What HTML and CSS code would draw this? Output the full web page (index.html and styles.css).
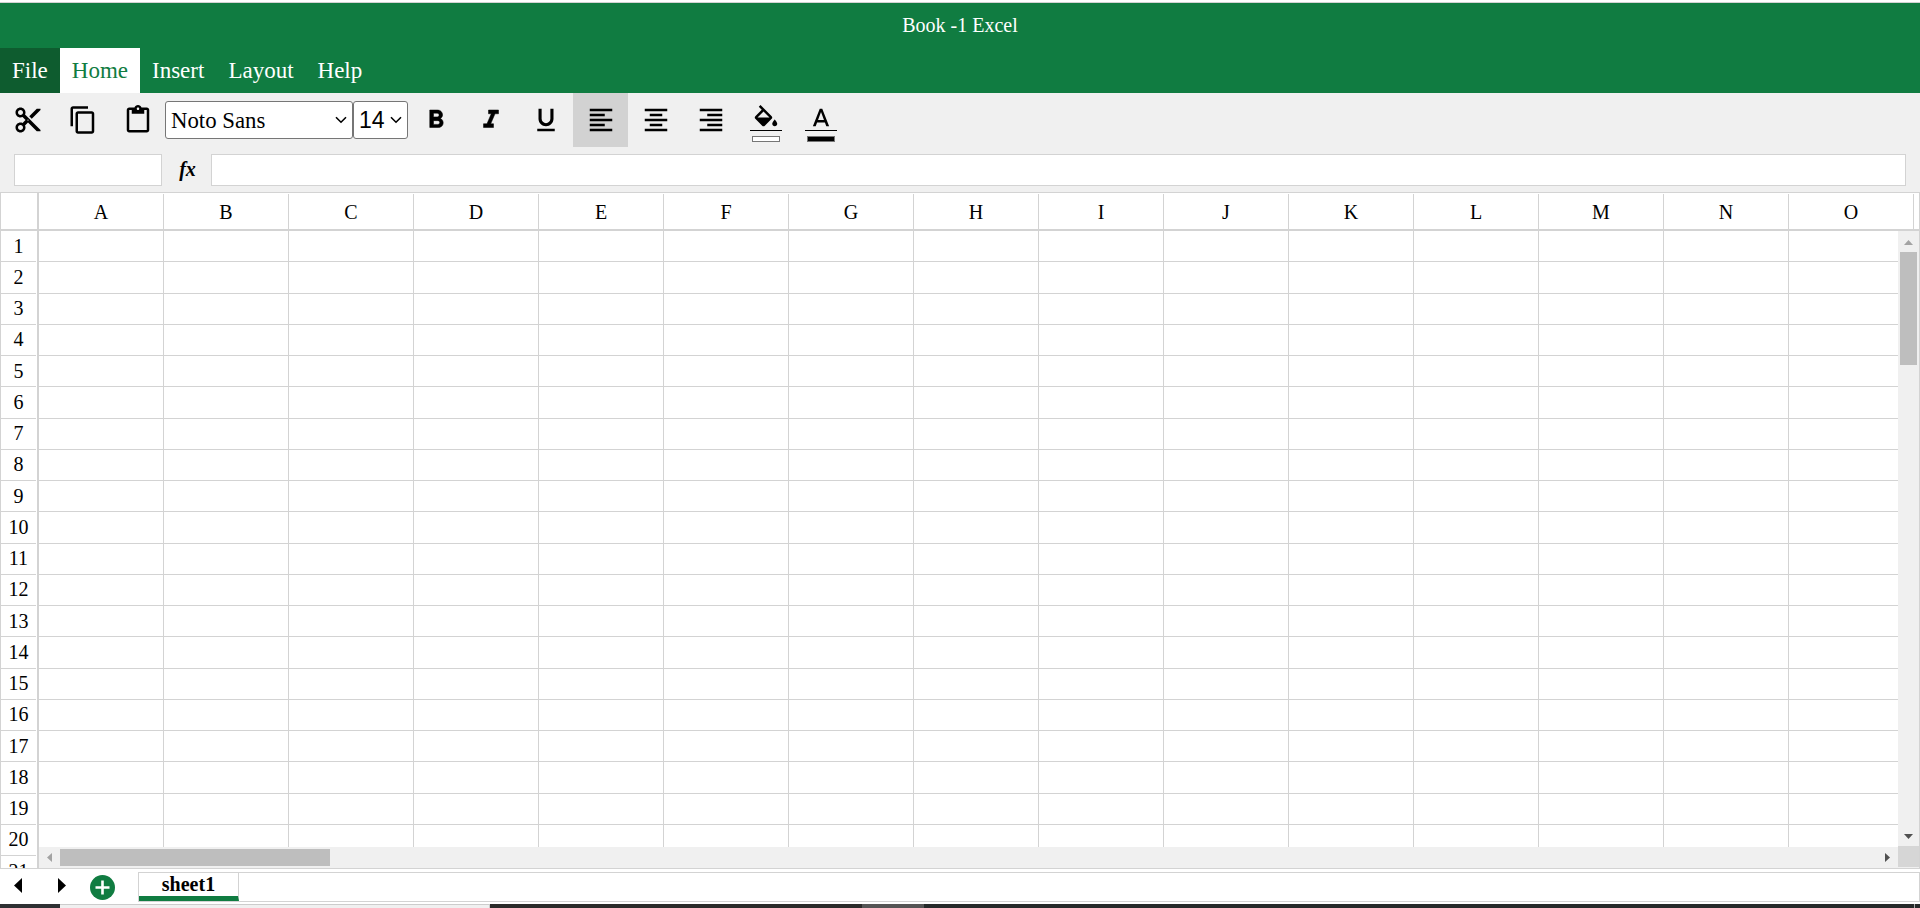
FILE: index.html
```html
<!DOCTYPE html>
<html lang="en">
<head>
<meta charset="utf-8">
<title>Book -1 Excel</title>
<link rel="stylesheet" href="styles.css">
</head>
<body>
<header class="appbar">
  <div class="title">Book -1 Excel</div>
  <nav class="menu">
    <a class="menu-item menu-file">File</a>
    <a class="menu-item menu-active">Home</a>
    <a class="menu-item">Insert</a>
    <a class="menu-item">Layout</a>
    <a class="menu-item">Help</a>
  </nav>
</header>
<section class="toolbar">
  <button class="tool"><svg viewBox="0 0 24 24"><path d="M9.64 7.64c.23-.5.36-1.05.36-1.64 0-2.21-1.79-4-4-4S2 3.79 2 6s1.79 4 4 4c.59 0 1.14-.13 1.64-.36L10 12l-2.36 2.36C7.14 14.13 6.59 14 6 14c-2.21 0-4 1.79-4 4s1.79 4 4 4 4-1.79 4-4c0-.59-.13-1.14-.36-1.64L12 14l7 7h3v-1L9.64 7.64zM6 8c-1.1 0-2-.89-2-2s.9-2 2-2 2 .89 2 2-.9 2-2 2zm0 12c-1.1 0-2-.89-2-2s.9-2 2-2 2 .89 2 2-.9 2-2 2zm6-7.5c-.28 0-.5-.22-.5-.5s.22-.5.5-.5.5.22.5.5-.22.5-.5.5zM19 3l-6 6 2 2 7-7V3z"/></svg></button>
  <button class="tool"><svg viewBox="0 0 24 24"><path d="M16 1H4c-1.1 0-2 .9-2 2v14h2V3h12V1zm3 4H8c-1.1 0-2 .9-2 2v14c0 1.1.9 2 2 2h11c1.1 0 2-.9 2-2V7c0-1.1-.9-2-2-2zm0 16H8V7h11v14z"/></svg></button>
  <button class="tool"><svg viewBox="0 0 24 24"><path d="M19 2h-4.18C14.4.84 13.3 0 12 0c-1.3 0-2.4.84-2.82 2H5c-1.1 0-2 .9-2 2v16c0 1.1.9 2 2 2h14c1.1 0 2-.9 2-2V4c0-1.1-.9-2-2-2zm-7 0c.55 0 1 .45 1 1s-.45 1-1 1-1-.45-1-1 .45-1 1-1zm7 18H5V4h2v3h10V4h2v16z"/></svg></button>
  <select class="select select-font"><option>Noto Sans</option></select>
  <select class="select select-size"><option>14</option></select>
  <button class="tool tool-heavy"><svg viewBox="0 0 24 24"><path d="M15.6 10.79c.97-.67 1.65-1.77 1.65-2.79 0-2.26-1.75-4-4-4H7v14h7.04c2.09 0 3.71-1.7 3.71-3.79 0-1.52-.86-2.82-2.15-3.42zM10 6.5h3c.83 0 1.5.67 1.5 1.5s-.67 1.5-1.5 1.5h-3v-3zm3.5 9H10v-3h3.5c.83 0 1.5.67 1.5 1.5s-.67 1.5-1.5 1.5z"/></svg></button>
  <button class="tool tool-heavy"><svg viewBox="0 0 24 24"><path d="M10 4v3h2.21l-3.42 8H6v3h8v-3h-2.21l3.42-8H18V4z"/></svg></button>
  <button class="tool"><svg viewBox="0 0 24 24"><path d="M12 17c3.31 0 6-2.69 6-6V3h-2.5v8c0 1.93-1.57 3.5-3.5 3.5S8.5 12.93 8.5 11V3H6v8c0 3.31 2.69 6 6 6zm-7 2v2h14v-2H5z"/></svg></button>
  <button class="tool tool-active"><svg viewBox="0 0 24 24"><path d="M15 15H3v2h12v-2zm0-8H3v2h12V7zM3 13h18v-2H3v2zm0 8h18v-2H3v2zM3 3v2h18V3H3z"/></svg></button>
  <button class="tool"><svg viewBox="0 0 24 24"><path d="M7 15v2h10v-2H7zm-4 6h18v-2H3v2zm0-8h18v-2H3v2zm4-6v2h10V7H7zM3 3v2h18V3H3z"/></svg></button>
  <button class="tool"><svg viewBox="0 0 24 24"><path d="M3 21h18v-2H3v2zm6-4h12v-2H9v2zm-6-4h18v-2H3v2zm6-4h12V7H9v2zM3 3v2h18V3H3z"/></svg></button>
  <button class="tool tool-color">
    <svg viewBox="0 0 24 24"><path d="M16.56 8.94L7.62 0 6.21 1.41l2.38 2.38-5.15 5.15c-.59.59-.59 1.54 0 2.12l5.5 5.5c.29.29.68.44 1.06.44s.77-.15 1.06-.44l5.5-5.5c.59-.58.59-1.53 0-2.12zM5.21 10L10 5.21 14.79 10H5.21zM19 11.5s-2 2.17-2 3.5c0 1.1.9 2 2 2s2-.9 2-2c0-1.33-2-3.5-2-3.5z"/></svg>
    <span class="swatch swatch-white"></span>
  </button>
  <button class="tool tool-color">
    <svg viewBox="0 0 24 24"><path d="M11 3L5.5 17h2.25l1.12-3h6.25l1.12 3h2.25L13 3h-2zm-1.38 9L12 5.67 14.38 12H9.62z"/></svg>
    <span class="swatch swatch-black"></span>
  </button>
</section>
<section class="formula">
  <input class="field field-name" type="text">
  <span class="fx">fx</span>
  <input class="field field-formula" type="text">
</section>
<main class="frame">
  <div class="grid grid-head">
    <div class="corner"></div><div class="ch">A</div><div class="ch">B</div><div class="ch">C</div><div class="ch">D</div><div class="ch">E</div><div class="ch">F</div><div class="ch">G</div><div class="ch">H</div><div class="ch">I</div><div class="ch">J</div><div class="ch">K</div><div class="ch">L</div><div class="ch">M</div><div class="ch">N</div><div class="ch">O</div>
  </div>
  <div class="grid grid-body">
    <div class="rh"><span>1</span></div><i></i><i></i><i></i><i></i><i></i><i></i><i></i><i></i><i></i><i></i><i></i><i></i><i></i><i></i><i></i>
    <div class="rh"><span>2</span></div><i></i><i></i><i></i><i></i><i></i><i></i><i></i><i></i><i></i><i></i><i></i><i></i><i></i><i></i><i></i>
    <div class="rh"><span>3</span></div><i></i><i></i><i></i><i></i><i></i><i></i><i></i><i></i><i></i><i></i><i></i><i></i><i></i><i></i><i></i>
    <div class="rh"><span>4</span></div><i></i><i></i><i></i><i></i><i></i><i></i><i></i><i></i><i></i><i></i><i></i><i></i><i></i><i></i><i></i>
    <div class="rh"><span>5</span></div><i></i><i></i><i></i><i></i><i></i><i></i><i></i><i></i><i></i><i></i><i></i><i></i><i></i><i></i><i></i>
    <div class="rh"><span>6</span></div><i></i><i></i><i></i><i></i><i></i><i></i><i></i><i></i><i></i><i></i><i></i><i></i><i></i><i></i><i></i>
    <div class="rh"><span>7</span></div><i></i><i></i><i></i><i></i><i></i><i></i><i></i><i></i><i></i><i></i><i></i><i></i><i></i><i></i><i></i>
    <div class="rh"><span>8</span></div><i></i><i></i><i></i><i></i><i></i><i></i><i></i><i></i><i></i><i></i><i></i><i></i><i></i><i></i><i></i>
    <div class="rh"><span>9</span></div><i></i><i></i><i></i><i></i><i></i><i></i><i></i><i></i><i></i><i></i><i></i><i></i><i></i><i></i><i></i>
    <div class="rh"><span>10</span></div><i></i><i></i><i></i><i></i><i></i><i></i><i></i><i></i><i></i><i></i><i></i><i></i><i></i><i></i><i></i>
    <div class="rh"><span>11</span></div><i></i><i></i><i></i><i></i><i></i><i></i><i></i><i></i><i></i><i></i><i></i><i></i><i></i><i></i><i></i>
    <div class="rh"><span>12</span></div><i></i><i></i><i></i><i></i><i></i><i></i><i></i><i></i><i></i><i></i><i></i><i></i><i></i><i></i><i></i>
    <div class="rh"><span>13</span></div><i></i><i></i><i></i><i></i><i></i><i></i><i></i><i></i><i></i><i></i><i></i><i></i><i></i><i></i><i></i>
    <div class="rh"><span>14</span></div><i></i><i></i><i></i><i></i><i></i><i></i><i></i><i></i><i></i><i></i><i></i><i></i><i></i><i></i><i></i>
    <div class="rh"><span>15</span></div><i></i><i></i><i></i><i></i><i></i><i></i><i></i><i></i><i></i><i></i><i></i><i></i><i></i><i></i><i></i>
    <div class="rh"><span>16</span></div><i></i><i></i><i></i><i></i><i></i><i></i><i></i><i></i><i></i><i></i><i></i><i></i><i></i><i></i><i></i>
    <div class="rh"><span>17</span></div><i></i><i></i><i></i><i></i><i></i><i></i><i></i><i></i><i></i><i></i><i></i><i></i><i></i><i></i><i></i>
    <div class="rh"><span>18</span></div><i></i><i></i><i></i><i></i><i></i><i></i><i></i><i></i><i></i><i></i><i></i><i></i><i></i><i></i><i></i>
    <div class="rh"><span>19</span></div><i></i><i></i><i></i><i></i><i></i><i></i><i></i><i></i><i></i><i></i><i></i><i></i><i></i><i></i><i></i>
    <div class="rh"><span>20</span></div><i></i><i></i><i></i><i></i><i></i><i></i><i></i><i></i><i></i><i></i><i></i><i></i><i></i><i></i><i></i>
    <div class="rh"><span>21</span></div><i></i><i></i><i></i><i></i><i></i><i></i><i></i><i></i><i></i><i></i><i></i><i></i><i></i><i></i><i></i>
  </div>
  <div class="vscroll">
    <svg class="sb-arrow sb-up" viewBox="0 0 9 5"><polygon points="4.5,0 9,5 0,5"/></svg>
    <div class="vthumb"></div>
    <svg class="sb-arrow sb-down" viewBox="0 0 9 5"><polygon points="0,0 9,0 4.5,5"/></svg>
  </div>
  <div class="hscroll">
    <svg class="sb-arrow sb-left" viewBox="0 0 5 9"><polygon points="5,0 5,9 0,4.5"/></svg>
    <div class="hthumb"></div>
    <svg class="sb-arrow sb-right" viewBox="0 0 5 9"><polygon points="0,0 5,4.5 0,9"/></svg>
    <div class="sb-corner"></div>
  </div>
</main>
<footer class="sheets">
  <svg class="nav nav-prev" viewBox="0 0 8 15"><polygon points="8,0 8,15 0,7.5"/></svg>
  <svg class="nav nav-next" viewBox="0 0 8 15"><polygon points="0,0 8,7.5 0,15"/></svg>
  <svg class="add" viewBox="0 0 25 25"><circle cx="12.5" cy="12.5" r="12.5"/><path d="M11.2 5.5h2.6v5.7h5.7v2.6h-5.7v5.7h-2.6v-5.7H5.5v-2.6h5.7z"/></svg>
  <div class="tabs">
    <div class="tab">sheet1</div>
  </div>
</footer>
<div class="strip">
  <span class="strip-a"></span><span class="strip-b"></span><span class="strip-c"></span><span class="strip-d"></span><span class="strip-e"></span><span class="strip-tick"></span><span class="strip-f"></span>
</div>
</body>
</html>
```
FILE: styles.css
```css
* { box-sizing: border-box; }
html, body { margin: 0; height: 908px; overflow: hidden; }
body {
  display: flex;
  flex-direction: column;
  background: #fff;
  font-family: "Liberation Serif", "Times New Roman", serif;
  color: #000;
  padding-top: 2px;
}
.appbar {
  flex: none;
  border-top: 1px solid #d3d3d3;
  background: #107c41;
  color: #fff;
}
.title {
  height: 45px;
  display: flex;
  align-items: center;
  justify-content: center;
  font-size: 20px;
}
.menu { display: flex; height: 45px; }
.menu-item {
  display: flex;
  align-items: center;
  padding: 0 12px;
  font-size: 23px;
}
.menu-file { background: #0e5c2f; }
.menu-active { background: #fff; color: #107c41; }

.toolbar {
  flex: none;
  display: flex;
  align-items: center;
  height: 54px;
  background: #f0f0f0;
}
.tool {
  flex: none;
  width: 55px;
  height: 54px;
  padding: 0;
  border: 0;
  background: transparent;
  display: flex;
  align-items: center;
  justify-content: center;
}
.tool svg { width: 30px; height: 30px; display: block; fill: #000; }
.tool-heavy svg { stroke: #000; stroke-width: .4; }
.tool-active { background: #d2d2d2; }
.tool-color { flex-direction: column; justify-content: flex-start; padding-top: 12px; }
.swatch {
  display: block;
  flex: none;
  width: 28px;
  height: 6px;
  margin-top: 1px;
  border: 1px solid #767676;
  position: relative;
}
.swatch::before {
  content: "";
  position: absolute;
  left: -3px;
  right: -3px;
  top: -7px;
  height: 1px;
  background: #000;
}
.swatch-white { background: #fff; }
.swatch-black { background: #000; }
.select {
  flex: none;
  height: 38px;
  color: #000;
  border: 1px solid #767676;
  border-radius: 3px;
  appearance: none;
  -webkit-appearance: none;
  padding: 0 18px 0 5px;
  background-color: #fff;
  background-image: url("data:image/svg+xml,%3Csvg xmlns='http://www.w3.org/2000/svg' width='12' height='8' viewBox='0 0 12 8'%3E%3Cpath d='M1 1.2l5 5 5-5' fill='none' stroke='%23000' stroke-width='1.6'/%3E%3C/svg%3E");
  background-repeat: no-repeat;
  background-position: right 5px center;
  background-size: 12px 8px;
}
.select-font { width: 188px; font: 22.8px "Liberation Serif", serif; }
.select-size { width: 55px; font: 23px "Liberation Sans", Arial, sans-serif; }

.formula {
  flex: none;
  display: flex;
  align-items: flex-start;
  height: 45px;
  padding: 7px 14px 0;
  background: #f0f0f0;
}
.field {
  height: 32px;
  border: 1px solid #d3d3d3;
  background: #fff;
  border-radius: 0;
  padding: 0 4px;
}
.field-name { flex: none; width: 148px; }
.field-formula { flex: 1; min-width: 0; }
.fx {
  flex: none;
  width: 49px;
  height: 30px;
  padding-left: 2px;
  display: flex;
  align-items: center;
  justify-content: center;
  font-size: 20px;
  font-style: italic;
  font-weight: bold;
}

.frame {
  flex: none;
  position: relative;
  height: 677px;
  border: 1px solid #d3d3d3;
  overflow: hidden;
  background: #fff;
}
.grid {
  display: grid;
  grid-template-columns: 38px repeat(15, 125px);
}
.grid-head {
  height: 38px;
  border-bottom: 2px solid #d3d3d3;
  font-size: 20px;
}
.corner { border-right: 2px solid #d3d3d3; }
.ch {
  margin-top: 1px;
  padding-top: 2px;
  border-right: 1px solid #d3d3d3;
  display: flex;
  align-items: center;
  justify-content: center;
}
.grid-body {
  height: 637px;
  overflow: hidden;
  grid-auto-rows: 31.25px;
  font-size: 20px;
}
.grid-body i {
  border-right: 1px solid #d3d3d3;
  border-bottom: 1px solid #d3d3d3;
}
.rh {
  border-right: 2px solid #d3d3d3;
  padding-right: 1px;
}
.rh span {
  height: 100%;
  display: flex;
  align-items: center;
  justify-content: center;
  border-bottom: 1px solid #d3d3d3;
}

.vscroll {
  position: absolute;
  left: 1897px;
  right: 0;
  top: 38px;
  bottom: 21px;
  background: #f0f0f0;
}
.vthumb {
  position: absolute;
  left: 2px;
  width: 17px;
  top: 21px;
  height: 113px;
  background: #bebebe;
}
.hscroll {
  position: absolute;
  left: 38px;
  right: 0;
  bottom: 0;
  height: 21px;
  background: #f0f0f0;
}
.hthumb {
  position: absolute;
  left: 21px;
  width: 270px;
  top: 2px;
  height: 17px;
  background: #bebebe;
}
.sb-corner {
  position: absolute;
  left: 1859px;
  top: -1px;
  width: 21px;
  height: 21px;
  background: #d6d6d6;
}
.sb-arrow { position: absolute; display: block; }
.sb-up { left: 6px; top: 9px; width: 9px; height: 5px; fill: #a3a3a3; }
.sb-down { left: 6px; bottom: 8px; width: 9px; height: 5px; fill: #505050; }
.sb-left { left: 8px; top: 6px; width: 5px; height: 9px; fill: #a3a3a3; }
.sb-right { left: 1846px; top: 6px; width: 5px; height: 9px; fill: #505050; }

.sheets {
  flex: none;
  display: flex;
  align-items: center;
  height: 35px;
  padding: 3px 0 2px;
  background: #fff;
}
.nav { flex: none; width: 8px; height: 15px; margin-bottom: 4px; fill: #000; }
.nav-prev { margin-left: 14px; }
.nav-next { margin-left: 36px; }
.add { flex: none; width: 25px; height: 25px; margin-left: 24px; fill: #107c41; }
.add path { fill: #fff; }
.tabs {
  flex: 1;
  height: 30px;
  margin-left: 23px;
  border: 1px solid #d3d3d3;
  display: flex;
}
.tab {
  width: 100px;
  border-right: 1px solid #d3d3d3;
  border-bottom: 5px solid #107c41;
  display: flex;
  align-items: center;
  justify-content: center;
  font-size: 20px;
  font-weight: bold;
}

.strip { flex: none; display: flex; height: 4px; background: #2a2a28; }
.strip span { display: block; height: 100%; }
.strip-a { width: 60px; background: #2e3033; }
.strip-b { width: 430px; background: #f0f0f0; border-top: 1px solid #ccc; border-right: 1px solid #ccc; }
.strip-c { width: 372px; background: #2b2b2a; }
.strip-d { width: 62px; background: #555; }
.strip-e { width: 990px; background: #262a2a; }
.strip-tick { width: 1px; background: #aaa; }
.strip-f { flex: 1; background: #262a2a; }
```
